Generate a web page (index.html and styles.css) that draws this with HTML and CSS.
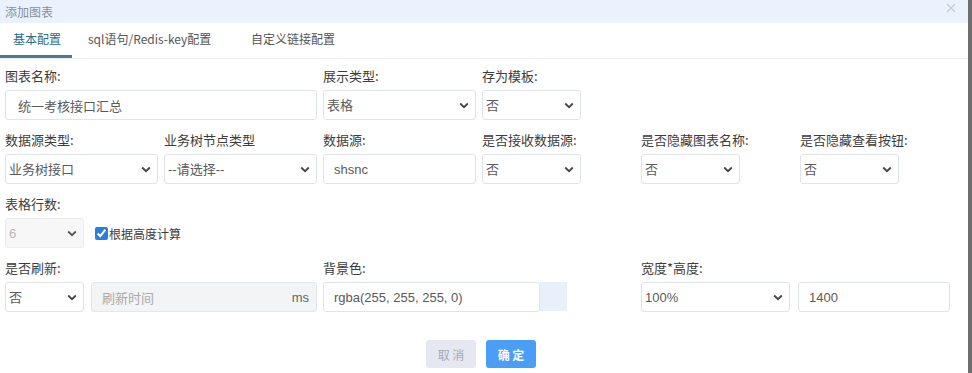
FILE: index.html
```html
<!DOCTYPE html>
<html lang="zh-CN">
<head>
<meta charset="utf-8">
<title>添加图表</title>
<link rel="stylesheet" href="styles.css">
</head>
<body>
<div class="dialog">
  <div class="dlg-head">
    <span class="dlg-title">添加图表</span>
    <svg class="dlg-close" width="10" height="10" viewBox="0 0 10 10"><path d="M1 1L9 9M9 1L1 9" stroke="#c8cdd3" stroke-width="1.3" fill="none"/></svg>
  </div>
  <div class="tabs">
    <div class="tab active">基本配置</div>
    <div class="tab">sql语句/Redis-key配置</div>
    <div class="tab">自定义链接配置</div>
  </div>
  <div class="form">
    <div class="field span2">
      <label class="lbl">图表名称:</label>
      <input class="inp" value="统一考核接口汇总">
    </div>
    <div class="field">
      <label class="lbl">展示类型:</label>
      <div class="sel"><select><option>表格</option></select><svg class="chev" viewBox="0 0 10 7"><path d="M1.2 1.5L5 5.2L8.8 1.5" stroke="#444" stroke-width="1.8" fill="none"/></svg></div>
    </div>
    <div class="field">
      <label class="lbl">存为模板:</label>
      <div class="sel w99"><select><option>否</option></select><svg class="chev" viewBox="0 0 10 7"><path d="M1.2 1.5L5 5.2L8.8 1.5" stroke="#444" stroke-width="1.8" fill="none"/></svg></div>
    </div>
    <div class="field"></div>
    <div class="field"></div>

    <div class="field">
      <label class="lbl">数据源类型:</label>
      <div class="sel"><select><option>业务树接口</option></select><svg class="chev" viewBox="0 0 10 7"><path d="M1.2 1.5L5 5.2L8.8 1.5" stroke="#444" stroke-width="1.8" fill="none"/></svg></div>
    </div>
    <div class="field">
      <label class="lbl">业务树节点类型</label>
      <div class="sel"><select><option>--请选择--</option></select><svg class="chev" viewBox="0 0 10 7"><path d="M1.2 1.5L5 5.2L8.8 1.5" stroke="#444" stroke-width="1.8" fill="none"/></svg></div>
    </div>
    <div class="field">
      <label class="lbl">数据源:</label>
      <input class="inp" value="shsnc">
    </div>
    <div class="field">
      <label class="lbl">是否接收数据源:</label>
      <div class="sel w99"><select><option>否</option></select><svg class="chev" viewBox="0 0 10 7"><path d="M1.2 1.5L5 5.2L8.8 1.5" stroke="#444" stroke-width="1.8" fill="none"/></svg></div>
    </div>
    <div class="field">
      <label class="lbl">是否隐藏图表名称:</label>
      <div class="sel w99"><select><option>否</option></select><svg class="chev" viewBox="0 0 10 7"><path d="M1.2 1.5L5 5.2L8.8 1.5" stroke="#444" stroke-width="1.8" fill="none"/></svg></div>
    </div>
    <div class="field">
      <label class="lbl">是否隐藏查看按钮:</label>
      <div class="sel w99"><select><option>否</option></select><svg class="chev" viewBox="0 0 10 7"><path d="M1.2 1.5L5 5.2L8.8 1.5" stroke="#444" stroke-width="1.8" fill="none"/></svg></div>
    </div>

    <div class="field span6">
      <label class="lbl">表格行数:</label>
      <div class="line">
        <div class="sel w79 disabled"><select disabled><option>6</option></select><svg class="chev" viewBox="0 0 10 7"><path d="M1.2 1.5L5 5.2L8.8 1.5" stroke="#555" stroke-width="1.8" fill="none"/></svg></div>
        <label class="chk"><input type="checkbox" checked>根据高度计算</label>
      </div>
    </div>

    <div class="field span2">
      <label class="lbl">是否刷新:</label>
      <div class="line">
        <div class="sel w79"><select><option>否</option></select><svg class="chev" viewBox="0 0 10 7"><path d="M1.2 1.5L5 5.2L8.8 1.5" stroke="#444" stroke-width="1.8" fill="none"/></svg></div>
        <div class="igroup">
          <input class="inp ig-inp" placeholder="刷新时间" disabled>
          <span class="addon">ms</span>
        </div>
      </div>
    </div>
    <div class="field span2">
      <label class="lbl">背景色:</label>
      <div class="line">
        <input class="inp color-inp" value="rgba(255, 255, 255, 0)">
        <span class="swatch"></span>
      </div>
    </div>
    <div class="field span2">
      <label class="lbl">宽度*高度:</label>
      <div class="line wh">
        <div class="sel w149"><select><option>100%</option></select><svg class="chev" viewBox="0 0 10 7"><path d="M1.2 1.5L5 5.2L8.8 1.5" stroke="#444" stroke-width="1.8" fill="none"/></svg></div>
        <input class="inp w152" value="1400">
      </div>
    </div>
  </div>
  <div class="btns">
    <button class="btn cancel">取 消</button>
    <button class="btn ok">确 定</button>
  </div>
</div>
</body>
</html>
```

FILE: styles.css
```css
* { box-sizing: border-box; }
html, body { margin: 0; padding: 0; }
body {
  width: 972px;
  height: 373px;
  overflow: hidden;
  background: #6e6e6e;
  font-family: "Noto Sans CJK SC", "Liberation Sans", sans-serif;
  font-size: 13px;
  color: #3c3c3c;
}
.dialog {
  width: 968px;
  height: 373px;
  background: #fff;
  display: flex;
  flex-direction: column;
}
.dlg-head {
  height: 23px;
  background: #e9f2fd;
  display: flex;
  align-items: center;
  justify-content: space-between;
  padding: 0 12px 0 5px;
}
.dlg-title { font-size: 12px; color: #8a8f96; line-height: 23px; }
.dlg-close { width: 10px; height: 10px; margin-top: -8px; }
.tabs {
  height: 36px;
  display: flex;
  border-bottom: 1px solid #eef0f2;
}
.tab {
  font-size: 12px;
  color: #555;
  line-height: 30px;
  padding-top: 1px;
  height: 35px;
}
.tab:nth-child(1) { width: 72px; padding-left: 13px; }
.tab:nth-child(2) { width: 163px; padding-left: 16px; }
.tab:nth-child(3) { padding-left: 16px; }
.tab.active {
  color: #2e6b8c;
  border-bottom: 3px solid #4b7d92;
}
.form {
  padding: 8px 0 0 5px;
  display: grid;
  grid-template-columns: repeat(6, 153px);
  column-gap: 6px;
  row-gap: 11px;
}
.field { display: flex; flex-direction: column; }
.span2 { grid-column: span 2; }
.span6 { grid-column: span 6; }
.lbl {
  height: 18px;
  line-height: 18px;
  margin-bottom: 5px;
  font-size: 13px;
  color: #3c3c3c;
}
.inp {
  height: 30px;
  border: 1px solid #dfe4ea;
  border-radius: 3px;
  padding: 0 10px;
  font-family: "Liberation Sans", "Noto Sans CJK SC", sans-serif;
  font-size: 13px;
  color: #5a5a5a;
  background: #fff;
  outline: none;
  width: 100%;
}
.span2 > .inp { padding-left: 12px; }
.sel { position: relative; height: 30px; width: 100%; }
.sel select {
  appearance: none;
  -webkit-appearance: none;
  width: 100%;
  height: 30px;
  border: 1px solid #dfe4ea;
  border-radius: 3px;
  padding: 0 0 0 3px;
  font-family: "Liberation Sans", "Noto Sans CJK SC", sans-serif;
  font-size: 13px;
  color: #5a5a5a;
  background: #fff;
  outline: none;
}
.chev {
  position: absolute;
  right: 7px;
  top: 12px;
  width: 10px;
  height: 7px;
  pointer-events: none;
}
.w99 { width: 99px; }
.w79 { width: 79px; }
.w149 { width: 149px; flex: none; }
.w152 { width: 152px; flex: none; }
.sel.disabled select { background: #f4f5f6; color: #999; }
.line { display: flex; align-items: center; height: 30px; }
.chk {
  display: flex;
  align-items: center;
  margin-left: 11px;
  font-size: 12px;
  color: #3c3c3c;
}
.chk input {
  width: 13px;
  height: 13px;
  margin: 0 1px 0 0;
  accent-color: #2b7de1;
}
.igroup {
  margin-left: 7px;
  width: 226px;
  height: 30px;
  display: flex;
  align-items: center;
  border: 1px solid #e3e6ea;
  border-radius: 3px;
  background: #f3f4f5;
}
.ig-inp {
  border: none;
  background: transparent;
  flex: 1;
  height: 28px;
  padding-left: 10px;
  font-family: "Noto Sans CJK SC", sans-serif;
}
.ig-inp::placeholder { color: #aaa; }
.addon { padding-right: 7px; color: #666; font-family: "Liberation Sans", sans-serif; font-size: 13px; }
.color-inp { width: 217px; flex: none; padding-left: 10px; }
.swatch {
  width: 27px;
  height: 29px;
  background: #e8f1fb;
  margin-top: -1px;
}
.wh { gap: 8px; }
.btns {
  display: flex;
  justify-content: center;
  gap: 10px;
  margin-top: 28px;
}
.btn {
  width: 50px;
  height: 28px;
  border: none;
  border-radius: 3px;
  font-family: "Noto Sans CJK SC", sans-serif;
  font-size: 12px;
}
.cancel { background: #e5e8f1; color: #a2a9b6; margin-left: -6px; }
.ok { background: #4b9ef5; color: #fff; font-weight: bold; }
```
